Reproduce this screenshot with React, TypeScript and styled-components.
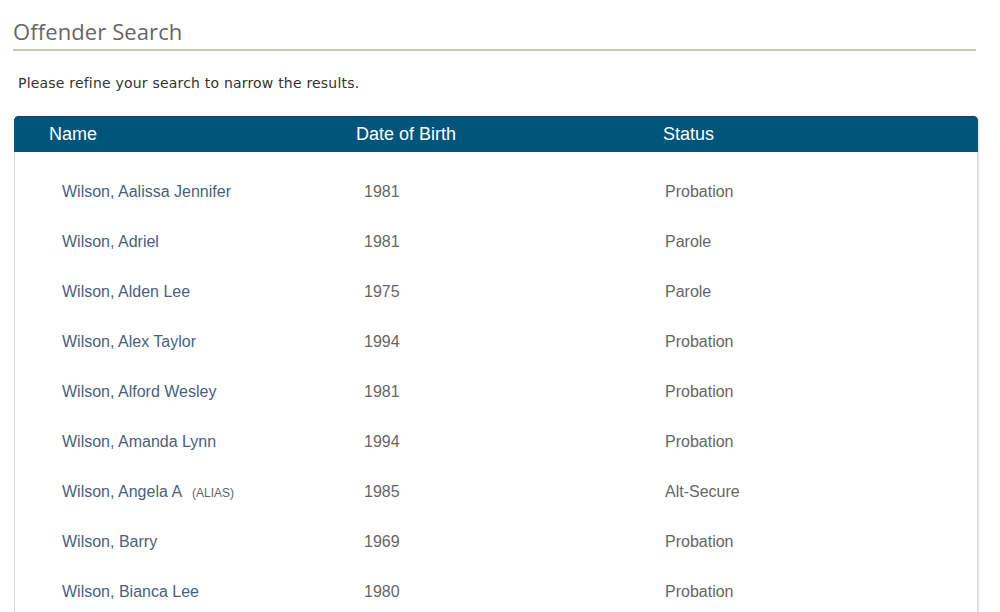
import React from 'react';
import styled, { createGlobalStyle } from 'styled-components';

const GlobalStyle = createGlobalStyle`
  html, body {
    margin: 0;
    padding: 0;
    background: #ffffff;
  }
  body {
    font-family: 'Liberation Sans', Arial, sans-serif;
  }
`;

type Offender = {
  name: string;
  born: string;
  status: string;
  alias?: boolean;
};

const offenders: Offender[] = [
  { name: 'Wilson, Aalissa Jennifer', born: '1981', status: 'Probation' },
  { name: 'Wilson, Adriel', born: '1981', status: 'Parole' },
  { name: 'Wilson, Alden Lee', born: '1975', status: 'Parole' },
  { name: 'Wilson, Alex Taylor', born: '1994', status: 'Probation' },
  { name: 'Wilson, Alford Wesley', born: '1981', status: 'Probation' },
  { name: 'Wilson, Amanda Lynn', born: '1994', status: 'Probation' },
  { name: 'Wilson, Angela A', born: '1985', status: 'Alt-Secure', alias: true },
  { name: 'Wilson, Barry', born: '1969', status: 'Probation' },
  { name: 'Wilson, Bianca Lee', born: '1980', status: 'Probation' },
];

function App() {
  return (
    <Page>
      <GlobalStyle />
      <Title>Offender Search</Title>
      <Notice>Please refine your search to narrow the results.</Notice>
      <ResultsCard>
        <HeaderRow>
          <HeaderCell>Name</HeaderCell>
          <HeaderCell>Date of Birth</HeaderCell>
          <HeaderCell>Status</HeaderCell>
        </HeaderRow>
        <Rows>
          {offenders.map((o) => (
            <Row key={o.name}>
              <NameLink href="#">
                {o.name}
                {o.alias && <Alias>(ALIAS)</Alias>}
              </NameLink>
              <Cell>{o.born}</Cell>
              <Cell>{o.status}</Cell>
            </Row>
          ))}
        </Rows>
      </ResultsCard>
    </Page>
  );
}
export default App;

const Page = styled.div`
  width: 1000px;
  height: 612px;
  overflow: hidden;
  padding-top: 16px;
  box-sizing: border-box;
`;
const Title = styled.h1`
  margin: 0 24px 0 13px;
  padding-bottom: 3px;
  font-family: 'Open Sans', 'DejaVu Sans', sans-serif;
  font-weight: 400;
  font-size: 22px;
  line-height: 30px;
  letter-spacing: 0.1px;
  color: #666666;
  border-bottom: 2px solid #cbcbb2;
`;
const Notice = styled.p`
  margin: 23px 0 24px 18px;
  font-family: 'DejaVu Sans', Verdana, sans-serif;
  font-size: 14px;
  line-height: 18px;
  letter-spacing: 0.2px;
  color: #333333;
`;
const ResultsCard = styled.div`
  margin: 0 22px 0 14px;
  border-radius: 5px 5px 0 0;
  border: 1px solid #d6d6d6;
  border-top: none;
  box-shadow: 1px 0 2px rgba(0, 0, 0, 0.12);
`;
const HeaderRow = styled.div`
  display: grid;
  grid-template-columns: 307px 307px 1fr;
  align-items: center;
  height: 36px;
  padding-left: 35px;
  margin: 0 -1px;
  background-color: #00567a;
  border-radius: 5px 5px 0 0;
  box-shadow: inset 0 1px 0 #1a3f57;
`;
const HeaderCell = styled.div`
  color: #ffffff;
  font-size: 18px;
`;
const Rows = styled.div`
  padding: 15px 0 0 47px;
`;
const Row = styled.div`
  display: grid;
  grid-template-columns: 302px 301px 1fr;
  align-items: center;
  height: 50px;
`;
const NameLink = styled.a`
  color: #4b5f7c;
  font-size: 16px;
  text-decoration: none;
`;
const Alias = styled.span`
  margin-left: 10px;
  font-size: 12px;
  color: #666666;
`;
const Cell = styled.div`
  color: #666666;
  font-size: 16px;
`;
